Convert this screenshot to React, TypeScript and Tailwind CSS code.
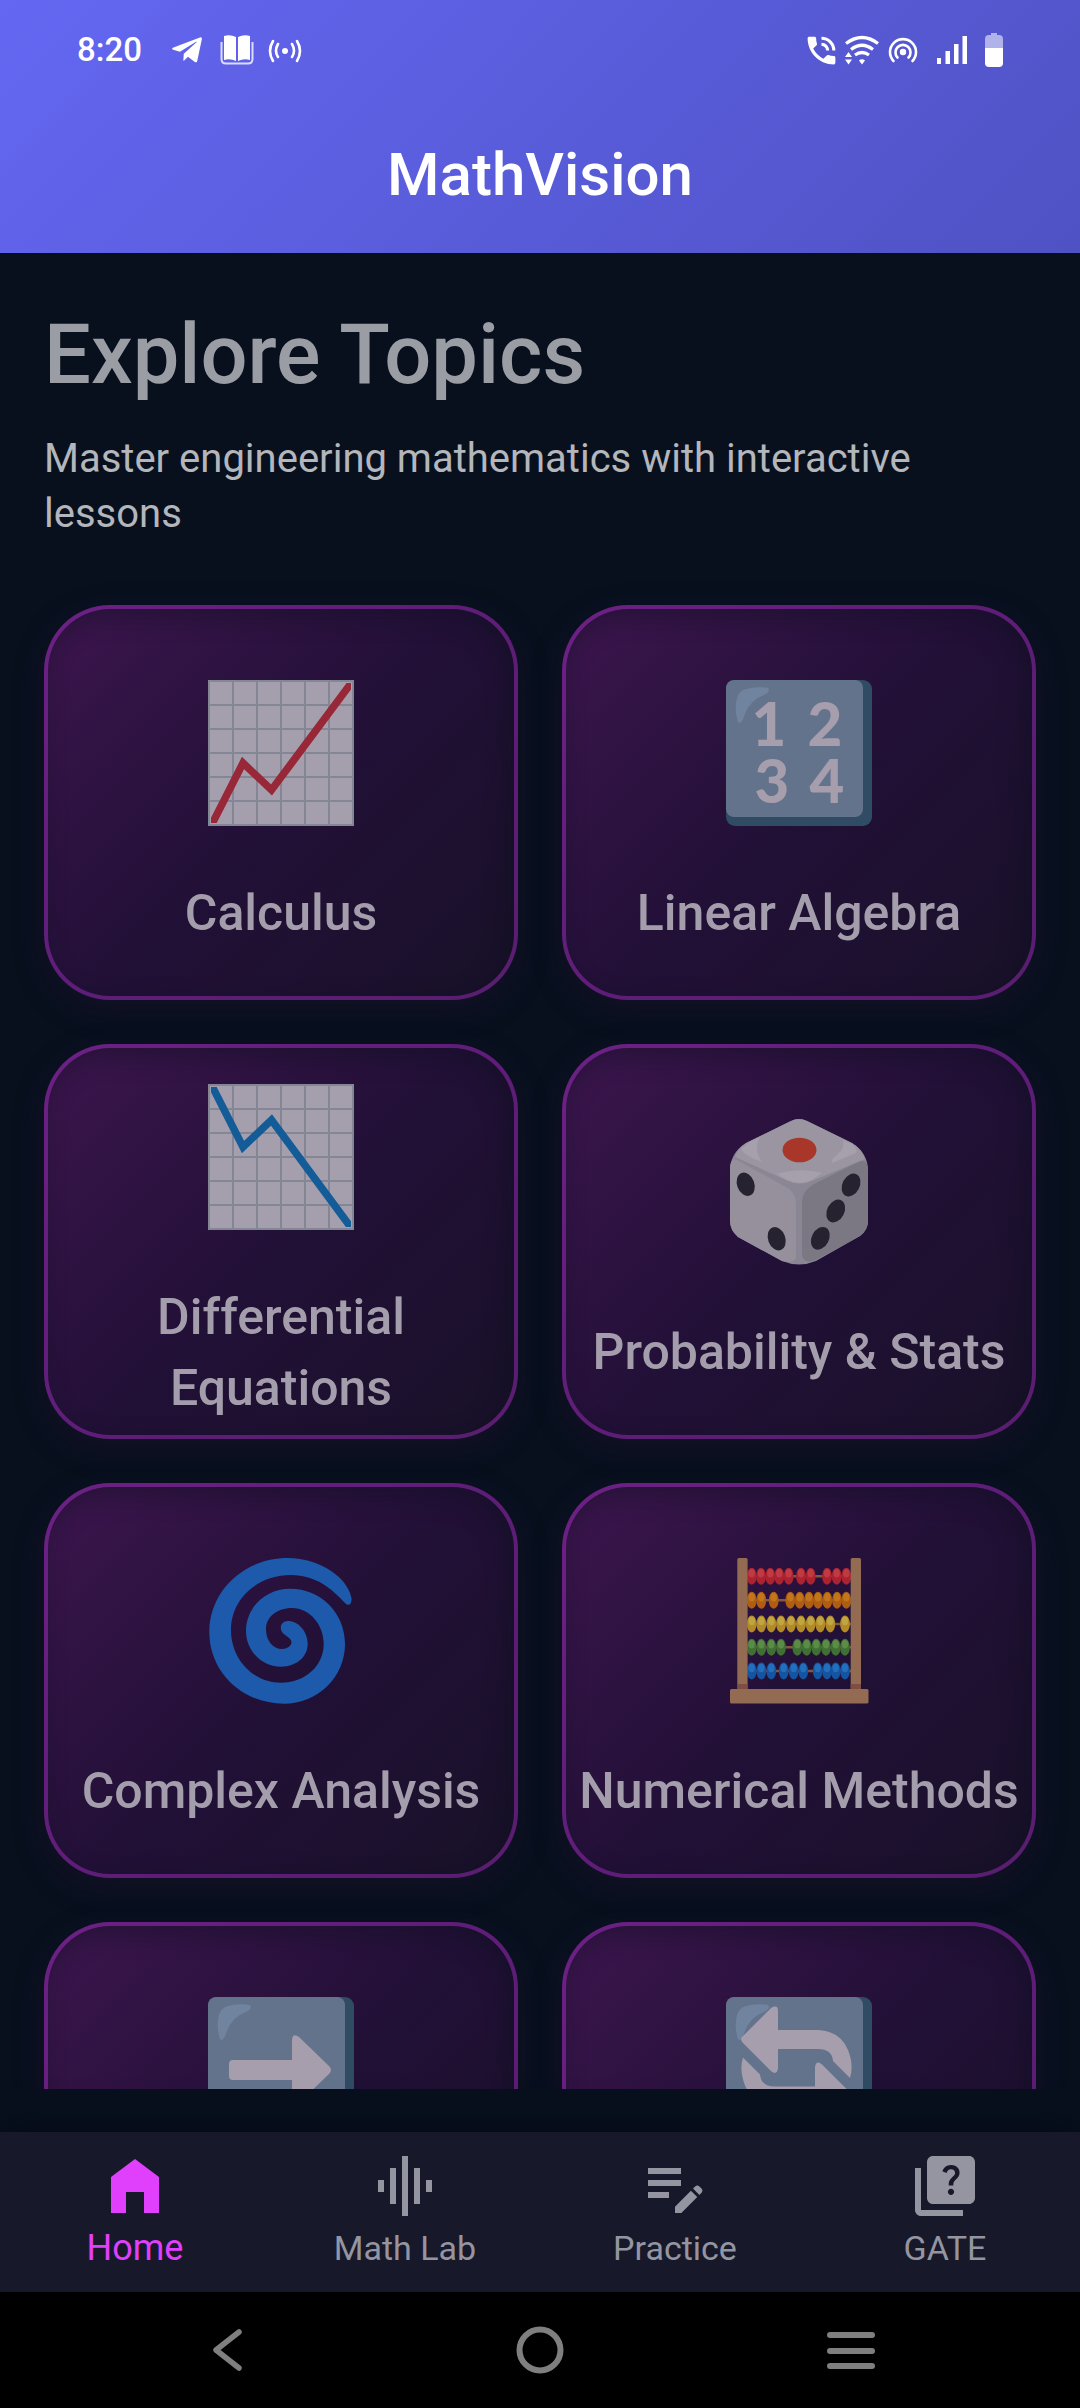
import React, { useState } from 'react';
import { FaTelegramPlane } from 'react-icons/fa';
import { MdEditNote, MdGraphicEq, MdPhoneInTalk, MdQuiz } from 'react-icons/md';

interface Topic {
  name: string;
  label?: string;
  icon: React.ReactNode;
}

interface BeadRow {
  y: number;
  color: string;
  shine: string;
  beads: number[];
}

const GRID_LINES = [25, 49, 73, 97, 121];

const BEAD_ROWS: BeadRow[] = [
  { y: 18.3, color: '#ab2230', shine: '#c03a42', beads: [25.7, 35, 44.3, 53.3, 62.7, 75, 84.7, 101, 110.7, 120.3] },
  { y: 42.3, color: '#ae5d12', shine: '#c2761c', beads: [25.7, 35.3, 47.7, 64.3, 73.7, 83, 92, 101.3, 111, 120.3] },
  { y: 66, color: '#b38a28', shine: '#bfa640', beads: [25.7, 35.3, 45.3, 55, 65, 75, 84.7, 94.3, 104.3, 119] },
  { y: 89.3, color: '#406f33', shine: '#5a8c46', beads: [25.7, 35.3, 45.3, 55, 71.3, 80.7, 90.3, 100, 109.7, 119] },
  { y: 113, color: '#1554a0', shine: '#2270bd', beads: [25.7, 35.3, 45.3, 57.7, 67.7, 77.3, 91.7, 101, 109.7, 119] },
];

function ChartIcon({ points, color }: { points: string; color: string }) {
  return (
    <svg viewBox="0 0 146 146" className="size-[146px]" aria-hidden="true">
      <rect x="1" y="1" width="144" height="144" fill="#a59fad" stroke="#838695" strokeWidth="2" />
      {GRID_LINES.map((p) => (
        <path key={p} d={`M${p} 1V145M1 ${p}H145`} stroke="#838695" strokeWidth="2" />
      ))}
      <svg x="3" y="3" width="140" height="140" viewBox="3 3 140 140">
        <polyline points={points} fill="none" stroke={color} strokeWidth="7.500" />
      </svg>
    </svg>
  );
}

function Tile({ children }: { children: React.ReactNode }) {
  return (
    <svg viewBox="0 0 146 146" className="size-[146px]" aria-hidden="true">
      <rect width="146" height="146" rx="9" fill="#2f4c64" />
      <rect width="137" height="137" rx="8" fill="#64738c" />
      <path
        d="M20 9Q30 6 42 8Q45 11 38 15Q24 20 19 34Q15 46 12 42Q8 30 11 18Q13 11 20 9Z"
        fill="#7084a0"
      />
      {children}
    </svg>
  );
}

function NumbersIcon() {
  return (
    <Tile>
      <g fill="#a69eac" fontFamily="Lato, sans-serif" fontWeight="900" fontSize="60" textAnchor="middle">
        <text x="43" y="66">1</text>
        <text x="99" y="66">2</text>
        <text x="46" y="123">3</text>
        <text x="101" y="123">4</text>
      </g>
    </Tile>
  );
}

function DiceIcon() {
  return (
    <svg viewBox="0 0 146 146" className="size-[146px]" aria-hidden="true">
      <path
        d="M65 2Q73-2 81 2L126 24Q142 34 142 52V102Q142 111 134 117L90 142Q73 149 56 142L12 118Q4 111 4 102V52Q4 34 20 24Z"
        fill="#8a8693"
      />
      <path d="M4 50Q4 38 11 41L58 67Q70 72 70 86V138Q69 145 56 142L12 118Q4 111 4 102Z" fill="#95909c" />
      <path d="M76 84Q76 71 90 64L132 43Q142 39 142 52V102Q142 111 134 117L90 141Q76 146 76 134Z" fill="#7b7783" />
      <path d="M65 2Q73-2 81 2L126 24Q136 30 139 40L88 61Q74 68 60 61L9 38Q12 29 20 24Z" fill="#9b95a2" />
      <path d="M25 22L34 18Q27 30 36 43Q20 38 15 30Z" fill="#a6a0ad" />
      <path d="M117 21L126 25Q132 30 130 34L106 44Q104 41 112 35Q119 29 117 21Z" fill="#a6a0ad" />
      <path d="M51 55Q73 48 96 54L86 61Q74 67 61 61Z" fill="#a6a0ad" />
      <ellipse cx="73.500" cy="31" rx="17" ry="12.300" fill="#a83629" />
      <g fill="#272230">
        <ellipse cx="19.700" cy="65.300" rx="8.600" ry="12" transform="rotate(-20 19.700 65.300)" />
        <ellipse cx="50.700" cy="119.700" rx="8.600" ry="12" transform="rotate(-20 50.700 119.700)" />
        <ellipse cx="125" cy="66" rx="8.600" ry="12" transform="rotate(27 125 66)" />
        <ellipse cx="109.700" cy="92" rx="8.600" ry="12" transform="rotate(27 109.700 92)" />
        <ellipse cx="94.300" cy="119.300" rx="8.600" ry="12" transform="rotate(27 94.300 119.300)" />
      </g>
    </svg>
  );
}

function CycloneIcon() {
  return (
    <svg viewBox="0 0 146 146" className="size-[146px]" aria-hidden="true">
      <path
        d="M143.500 40C140 20 112 0 80 0C36 0 1.300 33 1.300 74C1.300 114 34 145.700 76 145.700C110 145.700 137 119 137 86C137 55 113 30.700 82 30.700C57 30.700 38 50 38 73C38 93 54 108.700 73 108.700C88 108.700 99.700 99 99.700 86C99.700 73 90 63 80 63C74 63 71.500 68 73.500 73C75 77 83 79 83.500 84C83.500 88 79 91 74 91C65 91 58 83 58 71C58 59 69 50 84 50C102 50 115.700 67 115.700 86C115.700 108 97 124.700 73 124.700C45 124.700 23 101 23 72C23 41 49 17 83 17C108 17 124 31 137 45C141 49 144 46 143.500 40Z"
        fill="#1e5aab"
      />
    </svg>
  );
}

function AbacusIcon() {
  return (
    <svg viewBox="0 0 146 146" className="size-[146px]" aria-hidden="true">
      {BEAD_ROWS.map((row) => (
        <g key={row.y}>
          <path d={`M21 ${row.y}H125`} stroke="#80593f" strokeWidth="2.500" />
          {row.beads.map((x) => (
            <g key={x}>
              <ellipse cx={x} cy={row.y} rx="4.900" ry="8.500" fill={row.color} />
              <ellipse cx={x} cy={row.y - 3} rx="3.200" ry="4.200" fill={row.shine} />
            </g>
          ))}
        </g>
      ))}
      <rect x="11.300" y="0" width="10.300" height="132" rx="1.500" fill="#936a52" />
      <rect x="124.700" y="0" width="10.300" height="132" rx="1.500" fill="#936a52" />
      <path d="M11.300 126H21.600V131H11.300ZM124.700 126H135V131H124.700Z" fill="#7c4f42" />
      <rect x="4" y="131" width="138.500" height="14.500" rx="1.500" fill="#936a52" />
    </svg>
  );
}

function ArrowIcon() {
  return (
    <Tile>
      <path
        d="M25 63H84V44Q84 35 91 40L121 69Q125 73 121 77L91 106Q84 111 84 102V83H25Q21 83 21 79V67Q21 63 25 63Z"
        fill="#a69eac"
      />
    </Tile>
  );
}

function CycleIcon() {
  const half = 'M17 39L45 11Q52 7 52 14V33H92Q114 34 122 53Q128 68 124 81L107 64Q106 52 92 52H52V71Q51 79 45 74L17 46Q13 42 17 39Z';
  return (
    <Tile>
      <g fill="#a69eac">
        <path d={half} />
        <path d={half} transform="rotate(180 70.500 70.700)" />
      </g>
    </Tile>
  );
}

const TOPICS: Topic[] = [
  { name: 'Calculus', label: 'Calculus', icon: <ChartIcon points="3,146 35,83 63.500,110 144,2" color="#982838" /> },
  { name: 'Linear Algebra', label: 'Linear Algebra', icon: <NumbersIcon /> },
  {
    name: 'Differential Equations',
    label: 'Differential Equations',
    icon: <ChartIcon points="3,0 35,63 63.500,36 144,145" color="#145c98" />,
  },
  { name: 'Probability & Stats', label: 'Probability & Stats', icon: <DiceIcon /> },
  { name: 'Complex Analysis', label: 'Complex Analysis', icon: <CycloneIcon /> },
  { name: 'Numerical Methods', label: 'Numerical Methods', icon: <AbacusIcon /> },
  { name: 'Vectors', icon: <ArrowIcon /> },
  { name: 'Transforms', icon: <CycleIcon /> },
];

function HomeIcon() {
  return (
    <svg viewBox="0 0 24 24" className="size-[72px]" fill="currentColor" aria-hidden="true">
      <path d="M4 9v12h5v-7h6v7h5V9l-8-6z" />
    </svg>
  );
}

const TABS = [
  { name: 'Home', icon: <HomeIcon /> },
  { name: 'Math Lab', icon: <MdGraphicEq size={72} /> },
  { name: 'Practice', icon: <MdEditNote size={72} /> },
  { name: 'GATE', icon: <MdQuiz size={72} /> },
];

function StatusBar() {
  return (
    <div className="flex h-[100px] items-center justify-between px-[77px]">
      <div className="flex items-center">
        <span className="mr-7 text-[33px] leading-10 font-medium">8:20</span>
        <FaTelegramPlane size={34} className="mr-4" />
        {/* open book */}
        <svg viewBox="0 0 34 30" className="mr-[14px] h-[30px] w-[34px]" aria-hidden="true">
          <path d="M4 1Q10-1 16 2V26Q10 23 4 25ZM18 2Q24-1 30 1V25Q24 23 18 26Z" fill="#fff" />
          <path d="M1.500 7V24Q1.500 28.500 6 28.500H28Q32.500 28.500 32.500 24V7" fill="none" stroke="#dcdcff" strokeWidth="2" />
        </svg>
        <svg viewBox="0 0 34 26" className="h-[26px] w-[34px]" fill="none" stroke="#fff" strokeWidth="2.600" strokeLinecap="round" aria-hidden="true">
          <circle cx="17" cy="14" r="3" fill="#fff" stroke="none" />
          <path d="M10 7Q6 14 10 20M5 4Q-1 14 5 24M24 7Q28 14 24 20M29 4Q35 14 29 24" />
        </svg>
      </div>
      <div className="flex items-center">
        <MdPhoneInTalk size={37} className="mr-1" />
        <svg viewBox="0 0 36 30" className="mr-2 h-[30px] w-9" fill="none" stroke="#fff" strokeWidth="3.200" aria-hidden="true">
          <path d="M2 8.500Q18-3.500 34 8.500M7 14.500Q18 6 29 14.500M11 20Q18 15 25 20" />
          <path d="M15 25.500Q18 23 21 25.500L18 29.500ZM1 22L4.500 17L8 22ZM1 24.500H8L4.500 29.500Z" fill="#fff" stroke="none" />
        </svg>
        <svg viewBox="0 0 30 28" className="mr-[18px] h-7 w-[30px]" fill="none" stroke="#fff" strokeWidth="2.600" strokeLinecap="round" aria-hidden="true">
          <circle cx="15" cy="16" r="3.200" fill="#fff" stroke="none" />
          <path d="M5.500 25A13 13 0 1 1 24.500 25M9.500 21.500A7.500 7.500 0 1 1 20.500 21.500" />
        </svg>
        <svg viewBox="0 0 32 28" className="mr-[17px] h-7 w-8" fill="#fff" aria-hidden="true">
          <path d="M1 22H5V28H1ZM9.500 15H14V28H9.500ZM18 8H22.500V28H18ZM26.500 0H31V28H26.500Z" />
        </svg>
        <svg viewBox="0 0 18 34" className="h-[34px] w-[18px]" aria-hidden="true">
          <path d="M6 0H12V2H14Q18 2 18 6V15H0V6Q0 2 4 2H6Z" fill="#b0b2ea" />
          <path d="M0 15H18V30Q18 34 14 34H4Q0 34 0 30Z" fill="#fff" />
        </svg>
      </div>
    </div>
  );
}

function TopicCard({ topic }: { topic: Topic }) {
  return (
    <button
      aria-label={topic.name}
      className="flex aspect-[6/5] cursor-pointer flex-col items-center justify-center rounded-[66px] border-4 border-[#a82fc8]/45 bg-linear-135 from-[#3d154e] via-[#221037] to-[#181128] bg-origin-border pt-6 shadow-[0_10px_30px_rgba(40,16,52,0.35),inset_-6px_8px_24px_rgba(10,14,28,0.4)]"
    >
      {topic.icon}
      <span className="mt-[52px] min-h-[71px] text-[50px] leading-[71px] font-medium text-[#a49eac]">{topic.label}</span>
    </button>
  );
}

export default function App() {
  const [activeTab, setActiveTab] = useState('Home');

  return (
    <div className="flex h-screen flex-col overflow-hidden bg-[#08101e] font-[Roboto,sans-serif]">
      <header className="shrink-0 bg-linear-135 from-[#6467f2] to-[#4f52c3] text-white">
        <StatusBar />
        <div className="flex h-[153px] items-center justify-center pb-1">
          <span className="text-[60px] leading-[76px] font-medium">MathVision</span>
        </div>
      </header>

      <main className="mb-[43px] min-h-0 flex-1 overflow-hidden px-11 pt-[58px]">
        <h1 className="text-[83px] leading-[88px] font-medium text-[#9a9da4]">Explore Topics</h1>
        <p className="mt-8 text-[40px] leading-[55px] text-[#b3b6bb]">
          Master engineering mathematics with interactive lessons
        </p>
        <div className="mt-16 grid grid-cols-2 gap-11">
          {TOPICS.map((topic) => (
            <TopicCard key={topic.name} topic={topic} />
          ))}
        </div>
      </main>

      <nav className="grid shrink-0 grid-cols-4 bg-[#17192b] shadow-[0_-8px_30px_rgba(4,8,18,0.6)]">
        {TABS.map((tab) => (
          <button
            key={tab.name}
            onClick={() => setActiveTab(tab.name)}
            className={`flex h-40 cursor-pointer flex-col items-center pt-[18px] ${
              activeTab === tab.name ? 'text-[#e040fb]' : 'text-[#9495a0]'
            }`}
          >
            {tab.icon}
            <span className={`mt-[6px] leading-10 ${activeTab === tab.name ? 'text-[36px]' : 'text-[34px]'}`}>
              {tab.name}
            </span>
          </button>
        ))}
      </nav>

      {/* Android navigation keys */}
      <div className="grid h-[116px] shrink-0 grid-cols-3 items-center justify-items-center bg-black px-[73px] text-[#7f7f7f]">
        <button aria-label="Back" className="cursor-pointer">
          <svg viewBox="0 0 48 48" className="size-12" fill="none" stroke="currentColor" strokeWidth="5.500" strokeLinecap="round" strokeLinejoin="round" aria-hidden="true">
            <path d="M34 6L11 24L34 42" />
          </svg>
        </button>
        <button aria-label="Home screen" className="cursor-pointer">
          <svg viewBox="0 0 48 48" className="size-12" fill="none" stroke="currentColor" strokeWidth="6" aria-hidden="true">
            <circle cx="24" cy="24" r="20.500" />
          </svg>
        </button>
        <button aria-label="Recent apps" className="cursor-pointer">
          <svg viewBox="0 0 48 48" className="size-12" fill="none" stroke="currentColor" strokeWidth="6" strokeLinecap="round" aria-hidden="true">
            <path d="M3 9H45M3 25H45M3 40H45" />
          </svg>
        </button>
      </div>
    </div>
  );
}
